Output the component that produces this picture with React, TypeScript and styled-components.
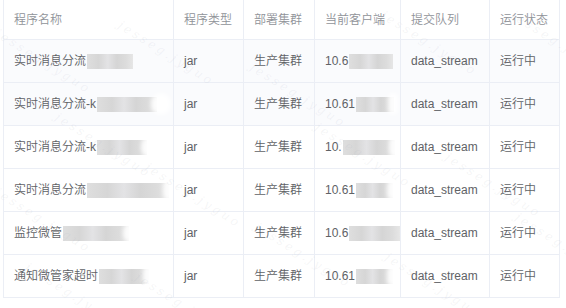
import React from "react";
import styled, { createGlobalStyle } from "styled-components";

const Global = createGlobalStyle`
  html, body { margin: 0; padding: 0; background: #fff; }
  body { font-family: "Liberation Sans", "Noto Sans CJK SC", sans-serif; font-size: 12px; }
`;

const Page = styled.div`
  position: relative;
  width: 566px;
  height: 308px;
  overflow: hidden;
  background: #fff;
`;

const Table = styled.div`
  margin-left: 3px;
  width: 557px;
  border-left: 1px solid #ebeef5;
  box-sizing: border-box;
`;

const Row = styled.div<{ $head?: boolean; $tint?: boolean }>`
  display: grid;
  grid-template-columns: 170px 70px 71px 86px 89px 70px;
  height: ${(p) => (p.$head ? 40 : 43)}px;
  border-bottom: 1px solid #ebeef5;
  box-sizing: border-box;
  background: ${(p) => (p.$tint ? "#fafbfd" : "#fff")};
  color: ${(p) => (p.$head ? "#909399" : "#606266")};
`;

const Cell = styled.div`
  position: relative;
  display: flex;
  align-items: center;
  padding-left: 10px;
  border-right: 1px solid #ebeef5;
  box-sizing: border-box;
  white-space: nowrap;
  overflow: hidden;
  font-size: 12px;
  font-weight: 350;
  line-height: 16px;
`;

const Mosaic = styled.span<{ $w: number; $smudge?: number }>`
  position: relative;
  display: inline-block;
  width: ${(p) => p.$w}px;
  height: 15px;
  margin-left: 1px;
  background: linear-gradient(
    90deg,
    #dedede 0%,
    #d6d6d6 25%,
    #e3e3e5 45%,
    #d5d5d5 65%,
    #dcdcdc 85%,
    #e6e6e6 100%
  );
  filter: blur(0.6px);
  &::after {
    content: "";
    position: absolute;
    left: ${(p) => p.$w - 6}px;
    top: -4px;
    width: ${(p) => p.$smudge ?? 0}px;
    height: 22px;
    border-radius: 12px;
    background: rgba(255, 255, 255, 0.9);
    filter: blur(2px);
  }
`;

const Overlay = styled.div`
  position: absolute;
  inset: 0;
  pointer-events: none;
`;

const Mark = styled.span`
  position: absolute;
  font-family: "DejaVu Serif", serif;
  font-style: italic;
  font-size: 12px;
  letter-spacing: 3px;
  color: rgba(170, 175, 190, 0.13);
  transform: rotate(32deg);
  transform-origin: left top;
  white-space: nowrap;
`;

type R = {
  name: string;
  nameBlur: number;
  nameSmudge?: number;
  client: string;
  clientBlur: number;
  clientSmudge?: number;
};

const rows: R[] = [
  { name: "实时消息分流", nameBlur: 46, client: "10.6", clientBlur: 44 },
  { name: "实时消息分流-k", nameBlur: 60, nameSmudge: 20, client: "10.61", clientBlur: 38, clientSmudge: 10 },
  { name: "实时消息分流-k", nameBlur: 50, nameSmudge: 20, client: "10.", clientBlur: 52, clientSmudge: 14 },
  { name: "实时消息分流", nameBlur: 82, nameSmudge: 14, client: "10.61", clientBlur: 37, clientSmudge: 14 },
  { name: "监控微管", nameBlur: 66, nameSmudge: 20, client: "10.6", clientBlur: 60, clientSmudge: 16 },
  { name: "通知微管家超时", nameBlur: 50, nameSmudge: 14, client: "10.61", clientBlur: 37, clientSmudge: 14 },
];

const marks = [
  { x: 123, y: 18 },
  { x: 0, y: 26 },
  { x: 386, y: 8 },
  { x: 516, y: 8 },
  { x: 255, y: 60 },
  { x: 60, y: 110 },
  { x: 320, y: 120 },
  { x: 450, y: 150 },
  { x: 150, y: 160 },
  { x: 0, y: 185 },
  { x: 390, y: 250 },
  { x: 260, y: 220 },
  { x: 30, y: 260 },
  { x: 520, y: 210 },
  { x: 140, y: 270 },
];

export default function App() {
  return (
    <Page>
      <Global />
      <Table>
        <Row $head>
          <Cell>程序名称</Cell>
          <Cell>程序类型</Cell>
          <Cell>部署集群</Cell>
          <Cell>当前客户端</Cell>
          <Cell>提交队列</Cell>
          <Cell>运行状态</Cell>
        </Row>
        {rows.map((r, i) => (
          <Row key={i} $tint={i < 2}>
            <Cell>
              {r.name}
              <Mosaic $w={r.nameBlur} $smudge={r.nameSmudge} />
            </Cell>
            <Cell>jar</Cell>
            <Cell>生产集群</Cell>
            <Cell>
              {r.client}
              <Mosaic $w={r.clientBlur} $smudge={r.clientSmudge} />
            </Cell>
            <Cell>data_stream</Cell>
            <Cell>运行中</Cell>
          </Row>
        ))}
      </Table>
      <Overlay>
        {marks.map((m, i) => (
          <Mark key={i} style={{ left: m.x, top: m.y }}>
            jesseg.jyguo
          </Mark>
        ))}
      </Overlay>
    </Page>
  );
}
